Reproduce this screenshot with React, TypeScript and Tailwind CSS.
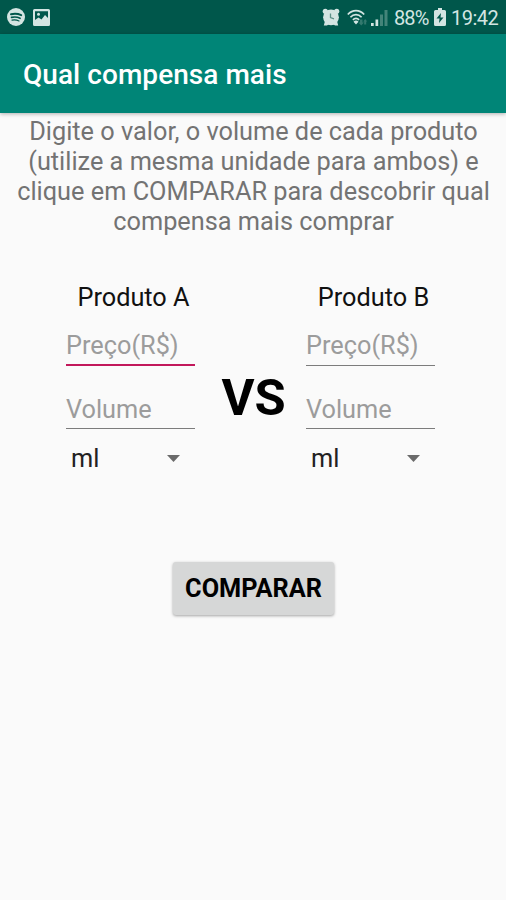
import { useState } from "react";

type ProdutoProps = {
  nome: string;
  ativo?: boolean;
};

function StatusBar() {
  return (
    <div className="flex h-[34px] items-center bg-[#00574b] pl-[7px] pr-[8px] text-[#d3e5e2]">
      {/* Spotify */}
      <svg width="18" height="18" viewBox="0 0 18 18" fill="none">
        <circle cx="9" cy="9" r="9" fill="currentColor" />
        <g stroke="#00574b" strokeLinecap="round">
          <path d="M4 6.300c3.600-.8 7.200-.5 10.200.9" strokeWidth="2" />
          <path d="M4.500 9.400c3-.7 6-.4 8.600.9" strokeWidth="1.600" />
          <path d="M5 12.200c2.600-.5 4.900-.2 7 .8" strokeWidth="1.200" />
        </g>
      </svg>

      {/* Imagem */}
      <svg className="ml-[8px]" width="17" height="17" viewBox="0 0 17 17">
        <path
          fill="currentColor"
          fillRule="evenodd"
          d="M1.500 0h14A1.500 1.500 0 0 1 17 1.500v14a1.500 1.500 0 0 1-1.500 1.500h-14A1.500 1.500 0 0 1 0 15.500v-14A1.500 1.500 0 0 1 1.500 0ZM2 2.300v8.700l3.500-2.500 3 2 3.500-4.500L15 9V2.300H2Z"
        />
        <circle cx="5.500" cy="5.200" r="1.500" fill="currentColor" />
      </svg>

      <div className="grow" />

      {/* Alarme */}
      <svg width="18" height="18" viewBox="0 0 18 18" fill="none">
        <g fill="currentColor">
          <circle cx="9" cy="9.300" r="7.900" />
          <circle cx="3.300" cy="3.300" r="2.600" />
          <circle cx="14.700" cy="3.300" r="2.600" />
          <path d="M1.800 17.500 3 13l4 3-2 1.500ZM16.200 17.500 15 13l-4 3 2 1.500Z" />
        </g>
        <path d="M8.500 5.500v4l3.500 1.300" stroke="#5d9188" strokeWidth="1.300" />
      </svg>

      {/* Wi-Fi */}
      <svg className="ml-[7px]" width="21" height="17" viewBox="0 0 21 17" fill="none">
        <g stroke="currentColor" strokeWidth="1.700">
          <path d="M.8 5.500C5.500.3 12.500.3 17.200 5.500" />
          <path d="M3.400 8.200c3.200-3.500 8-3.500 11.200 0" />
          <path d="M5.900 10.800c1.800-1.900 4.400-1.900 6.200 0" />
        </g>
        <path d="M6.500 12.700a3.300 3.300 0 0 1 5 0L9 15.500Z" fill="currentColor" />
        <path d="M13 10.500h2.500v3H17L14.200 16.500 11.500 13.500H13ZM17.200 15.500v-3h-1l2-2.500 2 2.500h-1v3Z" fill="#33796e" />
      </svg>

      {/* Sinal */}
      <svg className="ml-[3px]" width="17" height="17" viewBox="0 0 17 17">
        <path d="M0 14h2.700v3H0ZM4.500 10.500h2.700V17H4.500Z" fill="currentColor" />
        <path d="M9 5.500h3V17H9ZM13.500 1h3v16h-3Z" fill="#438479" />
      </svg>

      <span className="ml-[6px] mt-px w-[34px] whitespace-nowrap text-[20px] leading-[34px] tracking-[-0.9px]">88%</span>

      {/* Bateria */}
      <svg className="ml-[6px]" width="12" height="18" viewBox="0 0 12 18">
        <path d="M4 0h4v2h2.500A1.500 1.500 0 0 1 12 3.500v13a1.500 1.500 0 0 1-1.500 1.500h-9A1.500 1.500 0 0 1 0 16.500v-13A1.500 1.500 0 0 1 1.500 2H4Z" fill="currentColor" />
        <path d="M7 5 2.500 10.500h3L5 15l4.500-5.500h-3Z" fill="#00574b" />
      </svg>

      <span className="ml-[5px] mt-px w-[47px] whitespace-nowrap text-[20px] leading-[34px] tracking-[-0.5px]">19:42</span>
    </div>
  );
}

function Produto({ nome, ativo }: ProdutoProps) {
  const [preco, setPreco] = useState("");
  const [volume, setVolume] = useState("");

  return (
    <div className="flex w-[129px] flex-col">
      <h2 className="ml-[6px] text-center text-[25.3px] leading-[30px]">{nome}</h2>

      <input
        type="text"
        placeholder="Preço(R$)"
        value={preco}
        onChange={(e) => setPreco(e.target.value)}
        className={
          ativo
            ? "mt-[14px] mb-px h-[39px] w-full border-b-2 border-[#c2185b] pb-px text-[25.3px] outline-none placeholder:text-[#9c9c9c]"
            : "mt-[14px] mb-px h-[39px] w-full border-b border-[#7c7c7c] pb-[2px] text-[25.3px] outline-none placeholder:text-[#9c9c9c]"
        }
      />

      <input
        type="text"
        placeholder="Volume"
        value={volume}
        onChange={(e) => setVolume(e.target.value)}
        className="mt-[23px] mb-px h-[39px] w-full border-b border-[#7c7c7c] pt-px text-[25.3px] outline-none placeholder:text-[#9c9c9c]"
      />

      {/* Unidade */}
      <button className="mt-[14px] flex h-[30px] items-center justify-between pl-[5px] pr-[15px] text-[25.3px] leading-[30px] text-[#222]">
        ml
        <svg className="mb-[2px]" width="13" height="7" viewBox="0 0 13 7">
          <path d="M0 0h13L6.500 7Z" fill="#6a6a6a" />
        </svg>
      </button>
    </div>
  );
}

export default function App() {
  return (
    <div className="flex h-[900px] w-[506px] flex-col bg-[#fafafa] font-[Roboto,sans-serif] text-[#111]">
      <StatusBar />

      {/* Header */}
      <header className="flex h-[79px] items-center bg-[#008577] pl-[23px] shadow-[0_1px_4px_rgba(0,0,0,0.3)]">
        <h1 className="mt-[3px] text-[28px] font-medium tracking-[0.05px] text-white">Qual compensa mais</h1>
      </header>

      <p className="mt-[4px] pl-px text-center text-[25.3px] leading-[30px] text-[#737373]">
        Digite o valor, o volume de cada produto
        <br />
        (utilize a mesma unidade para ambos) e
        <br />
        clique em COMPARAR para descobrir qual
        <br />
        compensa mais comprar
      </p>

      {/* Produtos */}
      <main className="mt-[46px] flex pl-[66px]">
        <Produto nome="Produto A" ativo />
        <div className="w-[111px] pt-[85px] pl-[6px] text-center text-[50.6px] leading-[60px] font-bold text-black">VS</div>
        <Produto nome="Produto B" />
      </main>

      <button className="mt-[88px] ml-px h-[53px] w-[161px] self-center rounded-[3px] bg-[#d6d7d7] text-[25.3px] font-bold text-black shadow-[0_1px_3px_rgba(0,0,0,0.35)]">
        COMPARAR
      </button>
    </div>
  );
}
